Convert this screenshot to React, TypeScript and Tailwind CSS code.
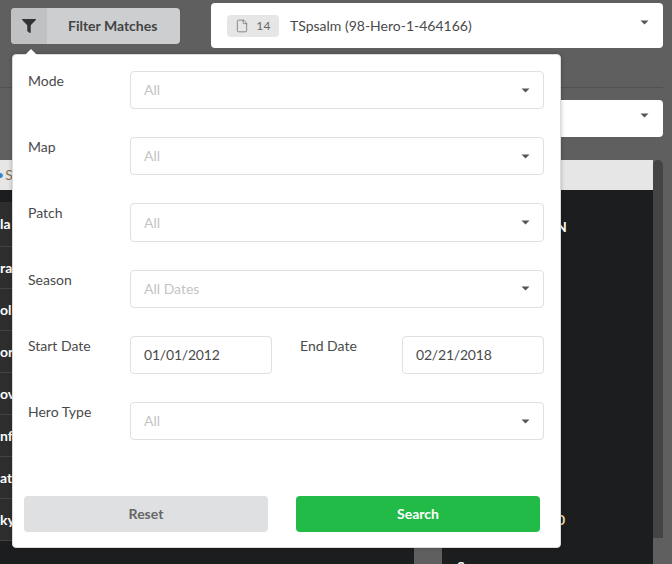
import { File } from 'lucide-react';
import { FaFilter } from 'react-icons/fa';

const Caret = ({ className = '' }: { className?: string }) => (
  <svg width="9" height="5" viewBox="0 0 9 5" className={className}>
    <path d="M0.5 0.5H8.5L4.5 4.5Z" fill="#555" />
  </svg>
);

const TopSelect = ({ className = '', children }: { className?: string; children?: React.ReactNode }) => (
  <div className={`flex items-center justify-between rounded bg-white pl-4 pr-[14px] ${className}`}>
    <div className="flex items-center">{children}</div>
    <Caret className="-translate-y-[3px]" />
  </div>
);

const Field = ({ text, placeholder = true }: { text: string; placeholder?: boolean }) => (
  <div className={`flex h-[38.25px] flex-1 items-center justify-between rounded border border-[#e0e0e0] bg-white pl-[13px] pr-[13px] text-sm ${placeholder ? 'text-[#c4c4c4]' : 'tracking-[-0.2px] text-[#4a4a4a]'}`}>
    <span>{text}</span>
    {placeholder && <Caret />}
  </div>
);

const FormRow = ({ label, text }: { label: string; text: string }) => (
  <div className="flex h-[66.2px] items-start">
    <div className="w-[102px] text-sm leading-5 text-[#4a4a4a]">{label}</div>
    <Field text={text} />
  </div>
);

const rows = ['ra', 'ol', 'or', 'ov', 'nf', 'at', 'ky'];

export default function App() {
  return (
    <div className="relative h-[564px] w-[672px] overflow-hidden bg-[#5f5f5f] font-[Lato,sans-serif]">
      {/* top bar */}
      <div className="flex h-[87px] items-start pl-[11px] pr-[9px] pt-[3px]">
        <button className="mt-[5px] flex h-9 w-[169px] items-center overflow-hidden rounded bg-[#ccced0] text-sm font-bold text-[#444]">
          <span className="flex h-full w-9 items-center justify-center bg-[#c0c1c3]">
            <FaFilter size={14} color="#333" />
          </span>
          <span className="pl-[21px]">Filter Matches</span>
        </button>
        <TopSelect className="ml-[31px] h-[45px] flex-1">
          <span className="flex h-[22px] w-[52px] items-center justify-center gap-[7px] rounded bg-[#e6e6e6] text-xs tracking-wide text-[#666]">
            <File size={14} strokeWidth={1.25} color="#666" />
            14
          </span>
          <span className="ml-[11px] text-sm text-[#4a4a4a]">TSpsalm (98-Hero-1-464166)</span>
        </TopSelect>
      </div>
      <div className="mr-[9px] h-px bg-[#515151]" />

      {/* second selector */}
      <div className="flex pl-[211px] pr-[9px] pt-3">
        <TopSelect className="h-[37px] flex-1" />
      </div>

      {/* results behind the filter */}
      <div className="mt-[23px] flex h-[404px] items-stretch">
        <div className="flex w-[414px] flex-col bg-[#1c1d1f]">
          <div className="h-[30px] bg-[#e6e6e6] text-sm leading-[29px] text-[#8a6d4b]">
            <span className="-ml-1 text-[#3b82c4]">•</span>
            <span className="ml-[1px]">S</span>
          </div>
          <div className="h-3 bg-[#1c1d1f]" />
          <div className="flex h-[45px] items-center border-b border-[#444] bg-[#2e2e2e] text-sm font-bold text-white">la</div>
          {rows.map((r) => (
            <div key={r} className="flex h-[42px] items-center border-b border-[#444] bg-[#2e2e2e] text-sm font-bold text-white">
              {r}
            </div>
          ))}
        </div>
        <div className="w-7" />
        <div className="flex w-[211px] flex-col bg-[#1c1d1f]">
          <div className="h-[30px] shrink-0 bg-[#e6e6e6]" />
          <div className="shrink-0 pl-[114px] pt-[29px] text-sm font-bold leading-4 text-white">N</div>
          <div className="shrink-0 pl-[115px] pt-[277px] text-sm font-bold leading-4 text-[#f0d9a8]">0</div>
          <div className="shrink-0 pl-[15px] pt-[31px] text-sm font-bold leading-4 text-white">S</div>
        </div>
        <div className="h-[378px] w-[10px] rounded-t-md bg-[#444]" />
      </div>

      {/* filter popover */}
      <div className="absolute left-3 top-[54px] h-[494px] w-[549px] rounded border border-[#dcdcdc] bg-white pl-[15px] pr-4 pt-4 shadow-[0_0_4px_rgba(0,0,0,0.25)]">
        <div className="absolute -top-[6px] left-[12px] h-0 w-0 border-x-[6px] border-b-[6px] border-x-transparent border-b-white" />
        <FormRow label="Mode" text="All" />
        <FormRow label="Map" text="All" />
        <FormRow label="Patch" text="All" />
        <FormRow label="Season" text="All Dates" />
        <div className="flex h-[66.2px] items-start">
          <div className="w-[102px] text-sm leading-5 text-[#4a4a4a]">Start Date</div>
          <div className="flex w-[142px]">
            <Field text="01/01/2012" placeholder={false} />
          </div>
          <div className="w-[130px] pl-7 text-sm leading-5 text-[#4a4a4a]">End Date</div>
          <div className="flex w-[142px]">
            <Field text="02/21/2018" placeholder={false} />
          </div>
        </div>
        <FormRow label="Hero Type" text="All" />
        <div className="-ml-1 mt-[28px] flex gap-7">
          <button className="h-9 w-[244px] rounded bg-[#dfe0e2] text-sm font-bold text-[#666]">Reset</button>
          <button className="h-9 w-[244px] rounded bg-[#22bb47] text-sm font-bold text-white">Search</button>
        </div>
      </div>
    </div>
  );
}
